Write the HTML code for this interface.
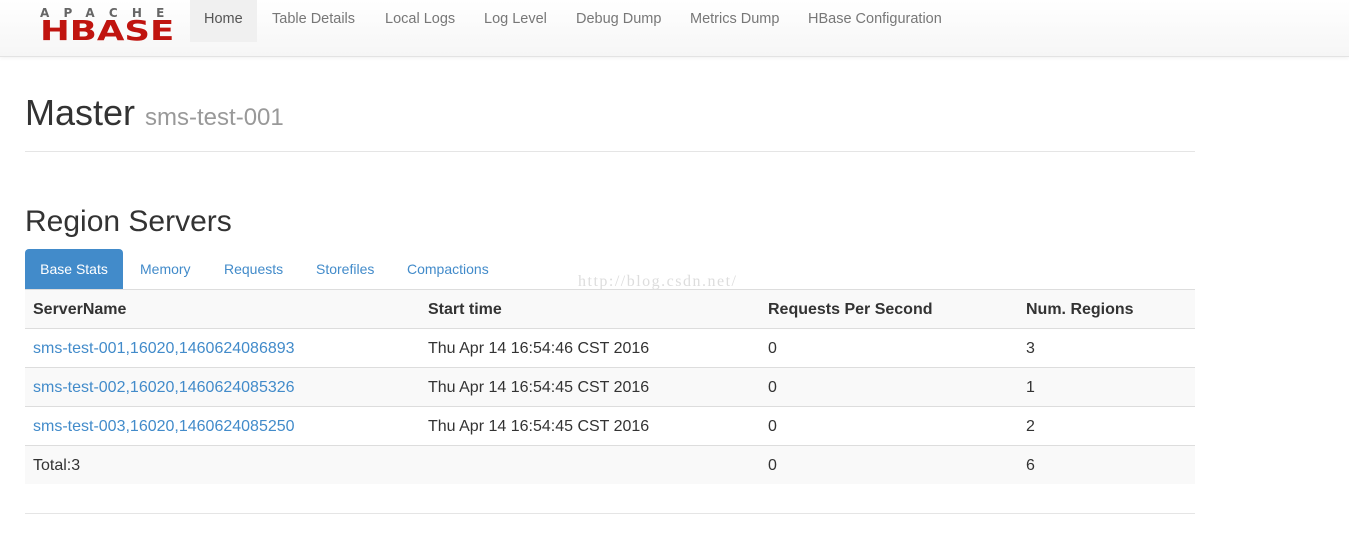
<!DOCTYPE html>
<html><head><style>
body{margin:0;font-family:"Liberation Sans",sans-serif;font-size:14px;color:#333;background:#fff;width:1349px;height:544px;overflow:hidden;position:relative}
.nav{position:absolute;left:0;top:0;width:1349px;height:56px;background:linear-gradient(#fff,#f6f6f6);border-bottom:1px solid #e3e3e3;box-shadow:0 1px 4px rgba(0,0,0,.06)}
.nav a{position:absolute;top:0;height:42px;line-height:38px;color:#777;font-size:14.5px;text-decoration:none}
.home{background:#f0f0f0;color:#555!important;padding:0 14px}
.ap{position:absolute;left:40px;top:7px;font-size:12px;font-weight:bold;color:#666;letter-spacing:14.2px;line-height:12px;font-family:"DejaVu Sans",sans-serif}
.hb{position:absolute;left:40px;top:15px;display:inline-block;font-size:28px;font-weight:bold;color:#c0140f;line-height:32px;transform:scaleX(1.27);transform-origin:left top;font-family:"DejaVu Sans",sans-serif}
h1{position:absolute;left:25px;top:93px;margin:0;font-size:36px;font-weight:normal;line-height:40px}
h1 small{font-size:24px;color:#999}
.hr{position:absolute;left:25px;width:1170px;height:1px;background:#e5e5e5}
h2{position:absolute;left:25px;top:205px;margin:0;font-size:30px;font-weight:normal;line-height:34px}
.tabs a{position:absolute;top:249px;height:40px;line-height:40px;color:#428bca;text-decoration:none}
.tabs .act{background:#428bca;color:#fff;border-radius:4px 4px 0 0;left:25px;width:98px;text-align:center}
.tbl{position:absolute;left:25px;top:289px;width:1170px;border-top:1px solid #ddd;font-size:16px}
.r{height:38px;border-bottom:1px solid #ddd;position:relative;line-height:39px}
.r.g{background:#f9f9f9}
.r span{position:absolute;top:0}
.r.h{font-weight:bold}
.r a{color:#428bca}
.c1{left:8px}.c2{left:403px}.c3{left:743px}.c4{left:1001px}
.wm{position:absolute;left:578px;top:273px;font-family:"Liberation Serif",serif;font-size:16px;color:#ddd;letter-spacing:1.5px}
</style></head><body>
<div class="nav">
<div class="ap">APACHE</div><div class="hb">HBASE</div>
<a class="home" style="left:190px">Home</a>
<a style="left:272px">Table Details</a>
<a style="left:385px">Local Logs</a>
<a style="left:484px">Log Level</a>
<a style="left:576px">Debug Dump</a>
<a style="left:690px">Metrics Dump</a>
<a style="left:808px">HBase Configuration</a>
</div>
<h1>Master <small>sms-test-001</small></h1>
<div class="hr" style="top:151px"></div>
<h2>Region Servers</h2>
<div class="tabs">
<a class="act">Base Stats</a>
<a style="left:140px">Memory</a>
<a style="left:224px">Requests</a>
<a style="left:316px">Storefiles</a>
<a style="left:407px">Compactions</a>
</div>
<div class="wm">http://blog.csdn.net/</div>
<div class="tbl">
<div class="r g h"><span class="c1">ServerName</span><span class="c2">Start time</span><span class="c3">Requests Per Second</span><span class="c4">Num. Regions</span></div>
<div class="r"><span class="c1"><a>sms-test-001,16020,1460624086893</a></span><span class="c2">Thu Apr 14 16:54:46 CST 2016</span><span class="c3">0</span><span class="c4">3</span></div>
<div class="r g"><span class="c1"><a>sms-test-002,16020,1460624085326</a></span><span class="c2">Thu Apr 14 16:54:45 CST 2016</span><span class="c3">0</span><span class="c4">1</span></div>
<div class="r"><span class="c1"><a>sms-test-003,16020,1460624085250</a></span><span class="c2">Thu Apr 14 16:54:45 CST 2016</span><span class="c3">0</span><span class="c4">2</span></div>
<div class="r g" style="border-bottom:none"><span class="c1">Total:3</span><span class="c3">0</span><span class="c4">6</span></div>
</div>
<div class="hr" style="top:513px"></div>
</body></html>
